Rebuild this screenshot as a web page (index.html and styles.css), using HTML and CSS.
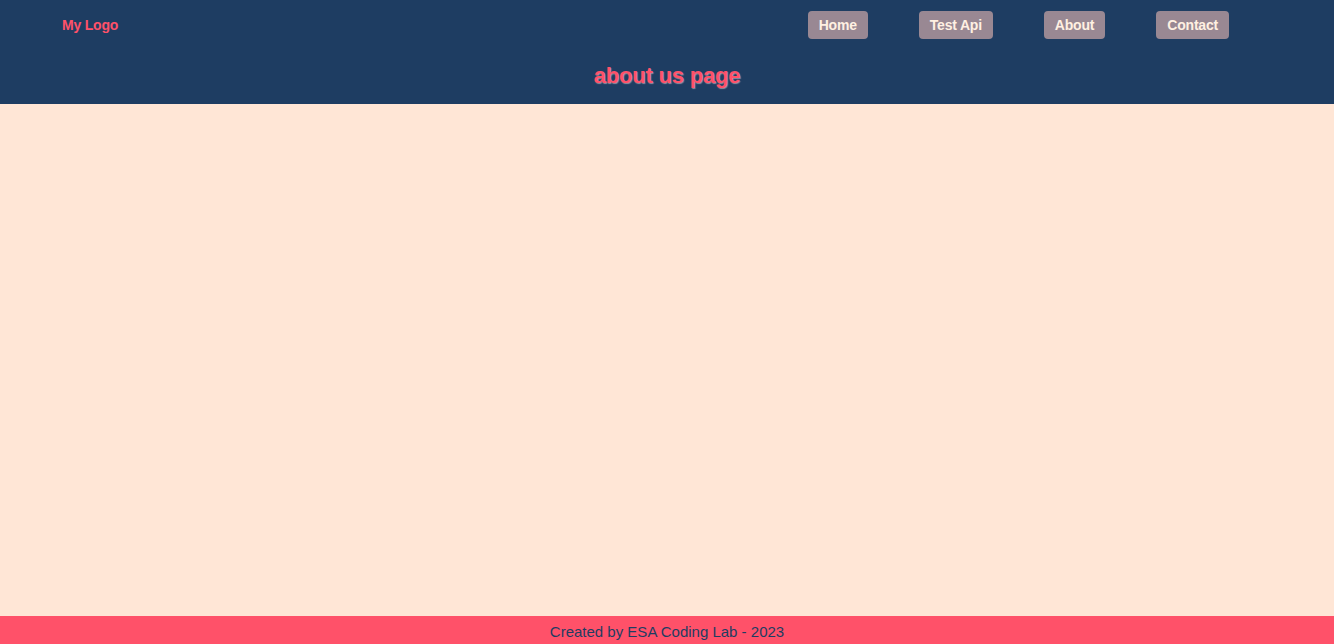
FILE: index.html
```html
<!DOCTYPE html>
<html lang="en">
<head>
<meta charset="utf-8">
<title>About</title>
<link rel="stylesheet" href="styles.css">
</head>
<body>
<header class="header">
  <nav class="navbar">
    <a class="logo" href="#">My Logo</a>
    <ul class="nav-links">
      <li><a class="nav-btn" href="#">Home</a></li>
      <li><a class="nav-btn" href="#">Test Api</a></li>
      <li><a class="nav-btn" href="#">About</a></li>
      <li><a class="nav-btn" href="#">Contact</a></li>
    </ul>
  </nav>
  <h1 class="page-title">about us page</h1>
</header>
<main class="content"></main>
<footer class="footer">Created by ESA Coding Lab - 2023</footer>
</body>
</html>
```
FILE: styles.css
```css
* { box-sizing: border-box; }
html, body { height: 100%; }
body {
  margin: 0;
  font-family: "Liberation Sans", Arial, sans-serif;
  background: #ffe6d6;
  display: flex;
  flex-direction: column;
  min-height: 100vh;
}
.header {
  background: #1e3d62;
  height: 104px;
  display: flex;
  flex-direction: column;
}
.navbar {
  height: 50px;
  display: flex;
  align-items: center;
  justify-content: space-between;
  padding: 0 105px 0 62px;
}
.logo {
  color: #ff5169;
  font-weight: bold;
  font-size: 14px;
  text-decoration: none;
  letter-spacing: -0.2px;
}
.nav-links {
  list-style: none;
  margin: 0;
  padding: 0;
  display: flex;
  gap: 51px;
}
.nav-btn {
  display: flex;
  align-items: center;
  height: 28px;
  padding: 0 11px;
  background: #998893;
  color: #fff0e2;
  border-radius: 4px;
  font-weight: bold;
  font-size: 14px;
  letter-spacing: -0.2px;
  text-decoration: none;
}
.page-title {
  margin: 0;
  flex: 1;
  display: flex;
  align-items: center;
  justify-content: center;
  padding-bottom: 2px;
  color: #ff5169;
  font-size: 22px;
  font-weight: bold;
  letter-spacing: -0.2px;
  text-shadow: 1px 1px 1px rgba(255, 220, 220, 0.5);
}
.content { flex: 1; }
.footer {
  height: 28px;
  background: #ff5169;
  color: #1e3d62;
  font-size: 15px;
  display: flex;
  align-items: center;
  justify-content: center;
  padding-top: 3px;
}
```
